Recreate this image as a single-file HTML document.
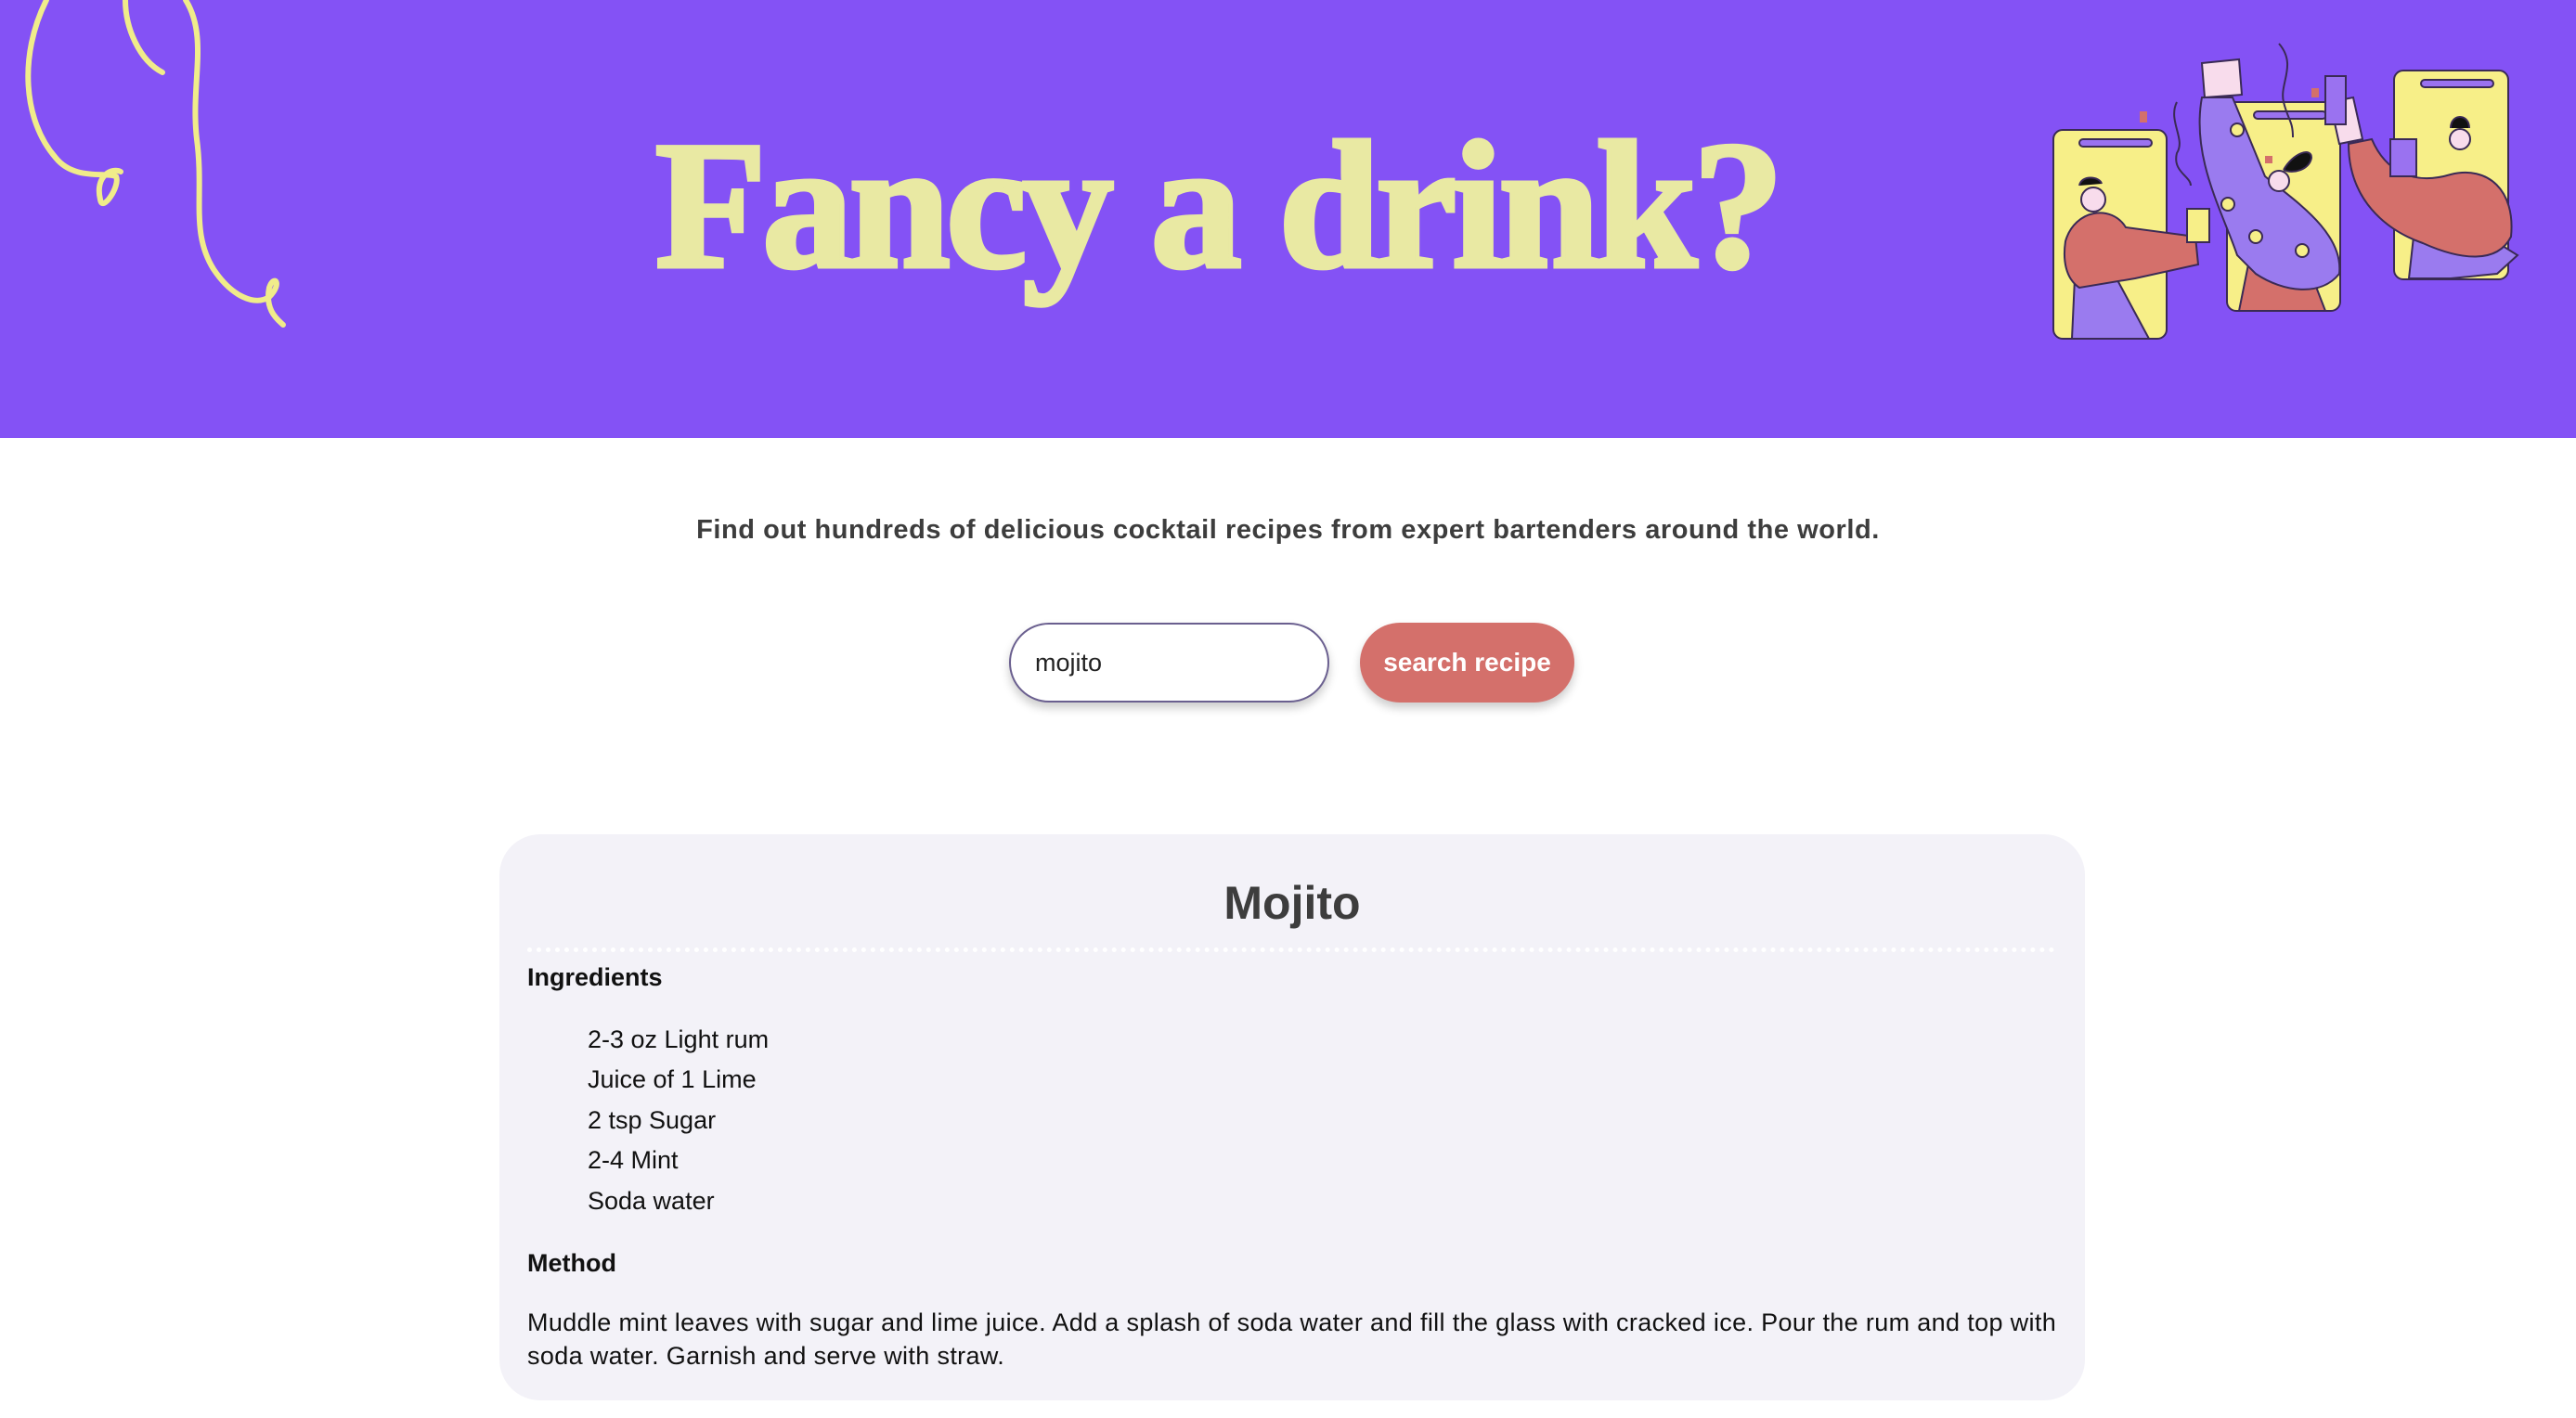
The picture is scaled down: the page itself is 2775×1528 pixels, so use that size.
<!DOCTYPE html>
<html><head><meta charset="utf-8">
<style>
html,body{margin:0;padding:0;width:2775px;height:1528px;overflow:hidden;background:#fff;font-family:"Liberation Sans",sans-serif;}
.hdr{position:absolute;left:0;top:0;width:2775px;height:472px;background:#8452f5;}
.title{position:absolute;left:-76px;width:2775px;top:124px;text-align:center;font-family:"Liberation Serif",serif;font-weight:900;font-size:196px;color:#e9e9a3;letter-spacing:-4.5px;line-height:1;-webkit-text-stroke:5px #e9e9a3;}
.tag{position:absolute;left:0;width:2775px;top:555px;text-align:center;font-weight:bold;font-size:29px;color:#3d3d3d;letter-spacing:0.55px}
.inp{position:absolute;left:1087px;top:671px;border:2px solid #6a5f8f;border-radius:44px;box-shadow:0 6px 10px rgba(0,0,0,.2);font-size:27px;line-height:82px;padding-left:26px;box-sizing:border-box;width:345px;height:86px;color:#222;background:#fff}
.btn{position:absolute;left:1465px;top:671px;width:231px;height:86px;border-radius:44px;background:#d4706b;color:#fff;font-weight:bold;font-size:28px;line-height:86px;text-align:center;box-shadow:0 6px 10px rgba(0,0,0,.2);}
.card{position:absolute;left:538px;top:899px;width:1708px;height:610px;background:#f3f2f8;border-radius:44px;}
.mt{position:absolute;left:538px;width:1708px;top:943px;text-align:center;font-weight:bold;font-size:50px;color:#3d3d3d;line-height:60px}
.dots{position:absolute;left:568px;width:1646px;top:1021px;border-top:5px dotted #fff;}
.t{position:absolute;font-size:27px;color:#111;line-height:36px;white-space:nowrap}
.b{font-weight:bold}
</style></head><body>
<div class="hdr">
<svg width="2775" height="472" style="position:absolute;left:0;top:0" fill="none">
<g stroke="#f0ec8a" stroke-width="6" stroke-linecap="round">
<path d="M50 0 C20 60 25 130 60 170 C80 195 115 185 125 190 C130 200 110 230 108 215 C102 190 120 180 130 185"/>
<path d="M135 0 C135 30 150 65 175 78"/>
<path d="M200 0 C225 40 205 90 212 150 C220 210 205 250 230 290 C250 320 275 330 290 320 C305 305 295 295 290 310 C285 335 300 345 305 350"/>
</g>
<g stroke="#3a2a55" stroke-width="2">
<rect x="2212" y="140" width="122" height="225" rx="10" fill="#f7ef88"/>
<rect x="2399" y="110" width="122" height="225" rx="10" fill="#f7ef88"/>
<rect x="2579" y="76" width="123" height="225" rx="10" fill="#f7ef88"/>
<rect x="2240" y="150" width="78" height="8" rx="4" fill="#9a72f0"/>
<rect x="2428" y="120" width="78" height="8" rx="4" fill="#9a72f0"/>
<rect x="2608" y="86" width="78" height="8" rx="4" fill="#9a72f0"/>
<path d="M2232 365 L2235 300 L2280 300 L2315 365 Z" fill="#9a7bef"/>
<path d="M2225 260 C2235 225 2275 220 2290 245 L2365 255 L2368 285 L2300 300 L2240 310 C2225 300 2222 280 2225 260 Z" fill="#d4706b"/>
<circle cx="2255" cy="215" r="13" fill="#f8dcec"/>
<path d="M2240 200 C2242 188 2262 190 2264 198" fill="#111"/>
<rect x="2356" y="225" width="24" height="36" fill="#f7ef88"/>
<path d="M2412 335 L2425 270 L2480 270 L2505 335 Z" fill="#d4706b"/>
<path d="M2372 105 L2405 105 L2440 190 C2470 215 2525 250 2520 295 C2500 320 2460 315 2430 295 L2410 275 C2395 230 2360 170 2372 105 Z" fill="#9a7bef"/>
<path d="M2372 68 L2412 64 L2415 102 L2375 105 Z" fill="#f8dcec"/>
<circle cx="2455" cy="195" r="11" fill="#f8dcec"/>
<path d="M2460 183 C2470 165 2490 158 2490 170 C2488 183 2470 188 2460 183" fill="#111"/>
<circle cx="2410" cy="140" r="7" fill="#f7ef88"/><circle cx="2430" cy="255" r="7" fill="#f7ef88"/><circle cx="2480" cy="270" r="7" fill="#f7ef88"/><circle cx="2400" cy="220" r="7" fill="#f7ef88"/>
<path d="M2595 300 L2600 255 L2680 255 L2712 275 L2690 295 L2640 300 Z" fill="#9a7bef"/>
<path d="M2530 155 L2555 150 C2570 185 2600 200 2640 188 C2680 178 2710 205 2705 255 C2690 285 2650 280 2610 262 C2570 248 2530 215 2530 155 Z" fill="#d4706b"/>
<path d="M2510 110 L2535 105 L2545 150 L2520 155 Z" fill="#f8dcec"/>
<rect x="2505" y="82" width="22" height="52" fill="#9a72f0"/>
<circle cx="2650" cy="150" r="11" fill="#f8dcec"/>
<path d="M2640 138 C2640 122 2660 122 2660 138" fill="#111"/>
<rect x="2575" y="150" width="28" height="40" fill="#9a72f0"/>
</g>
<g fill="#d4706b"><rect x="2305" y="120" width="8" height="12"/><rect x="2490" y="95" width="8" height="10"/><rect x="2440" y="168" width="8" height="8"/></g>
<g stroke="#3a2a55" stroke-width="2"><path d="M2345 110 C2335 130 2355 150 2345 165 C2340 185 2360 190 2360 200"/><path d="M2455 47 C2475 70 2455 90 2460 110 C2465 130 2470 130 2470 148"/></g>
</svg>
<div class="title">Fancy a drink?</div>
</div>
<div class="tag">Find out hundreds of delicious cocktail recipes from expert bartenders around the world.</div>
<div class="inp">mojito</div>
<div class="btn">search recipe</div>
<div class="card"></div>
<div class="mt">Mojito</div>
<div class="dots"></div>
<div class="t b" style="left:568px;top:1035px">Ingredients</div>
<div class="t" style="left:633px;top:1102px">2-3 oz Light rum</div>
<div class="t" style="left:633px;top:1145px">Juice of 1 Lime</div>
<div class="t" style="left:633px;top:1189px">2 tsp Sugar</div>
<div class="t" style="left:633px;top:1232px">2-4 Mint</div>
<div class="t" style="left:633px;top:1276px">Soda water</div>
<div class="t b" style="left:568px;top:1343px">Method</div>
<div class="t" style="left:568px;top:1407px;letter-spacing:0.35px">Muddle mint leaves with sugar and lime juice. Add a splash of soda water and fill the glass with cracked ice. Pour the rum and top with<br>soda water. Garnish and serve with straw.</div>
</body></html>
